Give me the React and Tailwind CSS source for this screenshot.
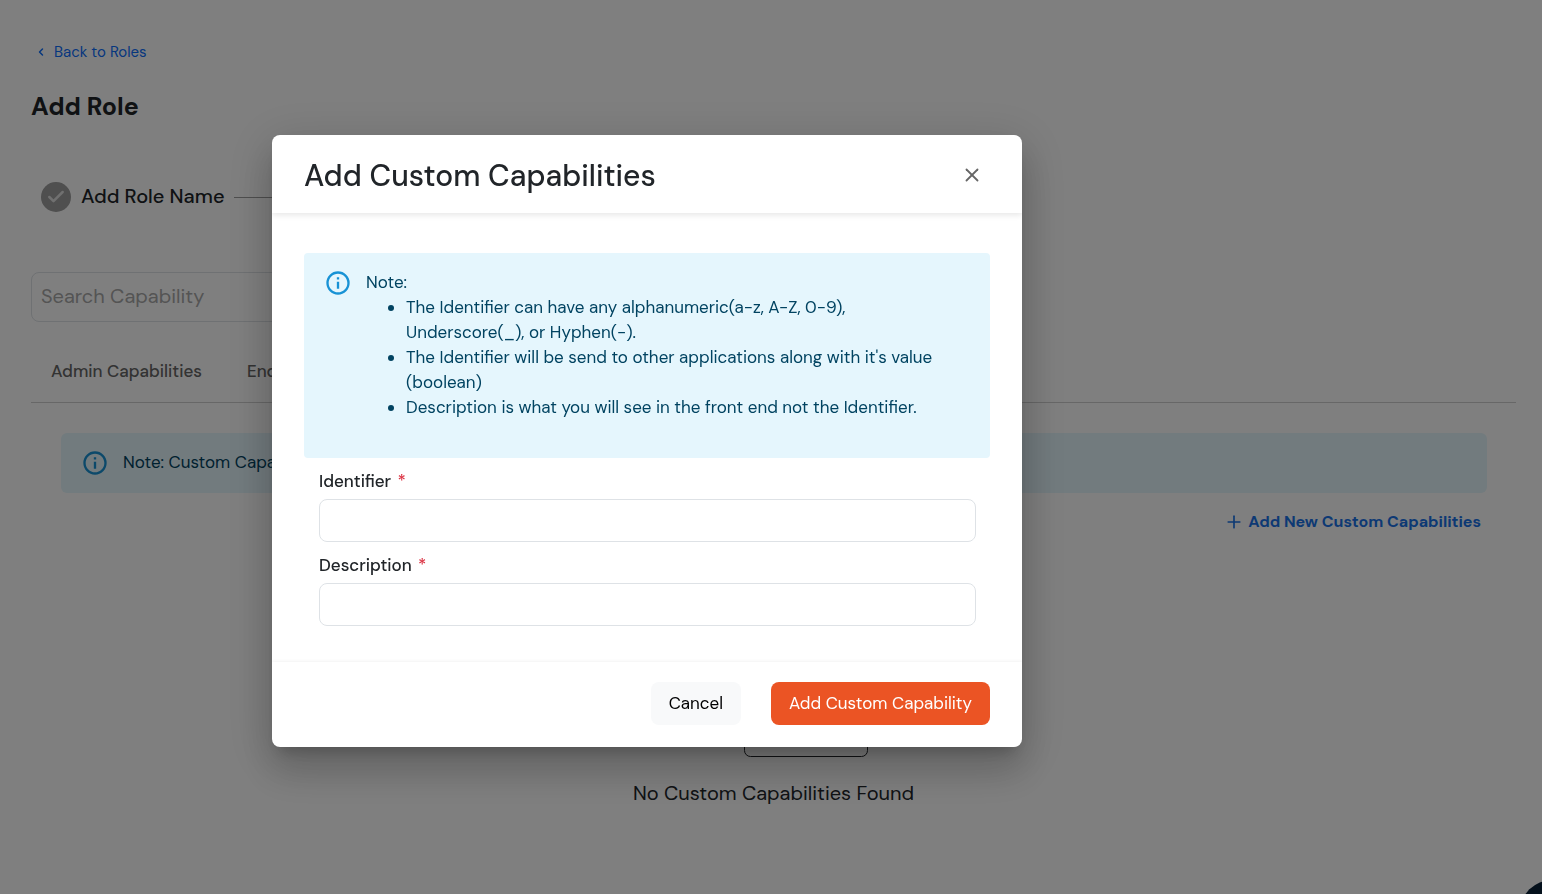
import { useState } from 'react';
import { Check, ChevronLeft, Plus, X } from 'lucide-react';

const tabs = ['Admin Capabilities', 'End User'];

const notes = [
  'The Identifier can have any alphanumeric(a-z, A-Z, 0-9), Underscore(_), or Hyphen(-).',
  "The Identifier will be send to other applications along with it's value (boolean)",
  'Description is what you will see in the front end not the Identifier.',
];

const InfoIcon = () => (
  <svg viewBox="0 0 24 24" className="size-7 shrink-0 text-[#0288d1] opacity-90" fill="currentColor" aria-hidden="true">
    <path d="M11,9H13V7H11M12,20C7.59,20 4,16.41 4,12C4,7.59 7.59,4 12,4C16.41,4 20,7.59 20,12C20,16.41 16.41,20 12,20M12,2A10,10 0 0,0 2,12A10,10 0 0,0 12,22A10,10 0 0,0 22,12A10,10 0 0,0 12,2M11,17H13V11H11V17Z" />
  </svg>
);

const Field = ({ id, label, value, onChange }) => (
  <div>
    <label htmlFor={id} className="mb-1.5 block text-[17px] leading-6 font-medium text-[#212529]">
      {label} <span className="ml-0.5 text-[#dc3545]">*</span>
    </label>
    <input
      id={id}
      type="text"
      required
      value={value}
      onChange={(e) => onChange(e.target.value)}
      className="block h-[43px] w-full rounded-lg border border-[#dee2e6] px-3 text-[17px] outline-none"
    />
  </div>
);

const RolePage = () => (
  <div className="min-h-screen bg-white pt-10 pr-[26px] pl-[31px]">
    <a href="#roles" className="ml-1 inline-flex h-6 items-center gap-[7px] align-top text-[15px] text-[#0d6efd]">
      <ChevronLeft className="size-3" strokeWidth={3} />
      Back to Roles
    </a>
    <h1 className="mt-[27px] text-[25px] leading-8 font-bold text-[#212529]">Add Role</h1>

    {/* Stepper */}
    <div className="mt-[59px] ml-2.5 flex h-[30px] w-3/5 items-center gap-2.5">
      <span className="flex size-[30px] items-center justify-center rounded-full bg-[#9e9e9e] text-[#e0e0e0]">
        <Check className="size-5" strokeWidth={3} />
      </span>
      <span className="pb-0.5 text-[20px] font-medium text-[#212529]">Add Role Name</span>
      <span className="h-px flex-1 bg-[#9e9e9e]"></span>
      <span className="pb-0.5 text-[20px] font-medium text-[#212529]">Capabilities</span>
    </div>

    <input
      type="search"
      aria-label="Search Capability"
      placeholder="Search Capability"
      className="mt-[60px] block h-[50px] w-1/2 rounded-lg border border-[#dee2e6] px-[9px] pb-0.5 text-[20px] placeholder:text-[#a9a9a9]"
    />

    <div className="mt-[18px] flex h-[63px] items-center gap-[45px] border-b border-[#cfcfcf] px-5 pt-0.5">
      {tabs.map((tab) => (
        <button key={tab} type="button" className="text-[17px] font-medium text-[#666666]">
          {tab}
        </button>
      ))}
    </div>

    <div className="mt-[30px] mr-[29px] ml-[30px] flex h-[60px] items-center gap-3.5 rounded-md bg-[#e5f6fd] px-5">
      <InfoIcon />
      <p className="text-[17px] text-[#014361]">Note: Custom Capability</p>
    </div>

    <div className="mt-[17px] mr-[35px] flex justify-end">
      <button type="button" className="flex h-6 items-center gap-1 text-base font-bold text-[#1a73e8]">
        <Plus className="size-5" strokeWidth={2} />
        Add New Custom Capabilities
      </button>
    </div>

    {/* Empty state */}
    <div className="mt-[63px] flex flex-col items-center">
      <svg width="188" height="160" viewBox="0 0 188 160" fill="none" stroke="#212529" aria-hidden="true">
        <rect x="0.5" y="20.5" width="124" height="90" rx="6" />
        <rect x="64.5" y="50.5" width="123" height="109" rx="6" fill="#fff" />
      </svg>
      <p className="mt-[22px] text-[20px] leading-7 text-[#212529]">No Custom Capabilities Found</p>
    </div>

    <button
      type="button"
      aria-label="Chat"
      className="fixed -right-[42px] -bottom-[50px] size-16 rounded-full bg-[#0a2239]"
    ></button>
  </div>
);

const CapabilityDialog = () => {
  const [identifier, setIdentifier] = useState('');
  const [description, setDescription] = useState('');

  return (
    <div className="fixed inset-0 flex items-center justify-center bg-black/50 pr-[248px] pb-3">
      <form
        role="dialog"
        aria-modal="true"
        aria-labelledby="dialog-title"
        onSubmit={(e) => e.preventDefault()}
        className="w-full max-w-[750px] overflow-hidden rounded-lg bg-white shadow-[0_11px_15px_-7px_rgba(0,0,0,0.2),0_24px_38px_3px_rgba(0,0,0,0.14),0_9px_46px_8px_rgba(0,0,0,0.12)]"
      >
        <header className="flex h-[78px] items-center justify-between pt-0.5 pr-[39px] pl-8 shadow-[0_2px_6px_rgba(0,0,0,0.1)]">
          <h2 id="dialog-title" className="text-[30px] font-medium text-[#212529]">
            Add Custom Capabilities
          </h2>
          <button type="button" aria-label="Close" className="text-[#666666]">
            <X className="size-[22px]" strokeWidth={2} />
          </button>
        </header>

        <div className="px-8 pt-10 pb-9">
          <div className="flex gap-3.5 rounded-sm bg-[#e5f6fd] pt-4 pr-8 pb-[38px] pl-5 text-[17px] leading-[25px] text-[#014361]">
            <InfoIcon />
            <div className="pt-px">
              <p>Note:</p>
              <ul className="list-disc pl-10">
                {notes.map((note) => (
                  <li key={note}>{note}</li>
                ))}
              </ul>
            </div>
          </div>
          <div className="mt-[11px] space-y-[11px] pr-[14px] pl-[15px]">
            <Field id="identifier" label="Identifier" value={identifier} onChange={setIdentifier} />
            <Field id="description" label="Description" value={description} onChange={setDescription} />
          </div>
        </div>

        <footer className="flex justify-end gap-[30px] px-8 pt-5 pb-[22px] shadow-[0_-1px_3px_rgba(0,0,0,0.05)]">
          <button type="button" className="h-[43px] rounded-lg bg-[#f8f9fa] px-[18px] text-[17px] text-black">
            Cancel
          </button>
          <button type="submit" className="h-[43px] rounded-lg bg-[#eb5424] px-[18px] text-[17px] text-white">
            Add Custom Capability
          </button>
        </footer>
      </form>
    </div>
  );
};

const App = () => (
  <div className="font-['DM_Sans',Inter,sans-serif]">
    <RolePage />
    <CapabilityDialog />
  </div>
);

export default App;
